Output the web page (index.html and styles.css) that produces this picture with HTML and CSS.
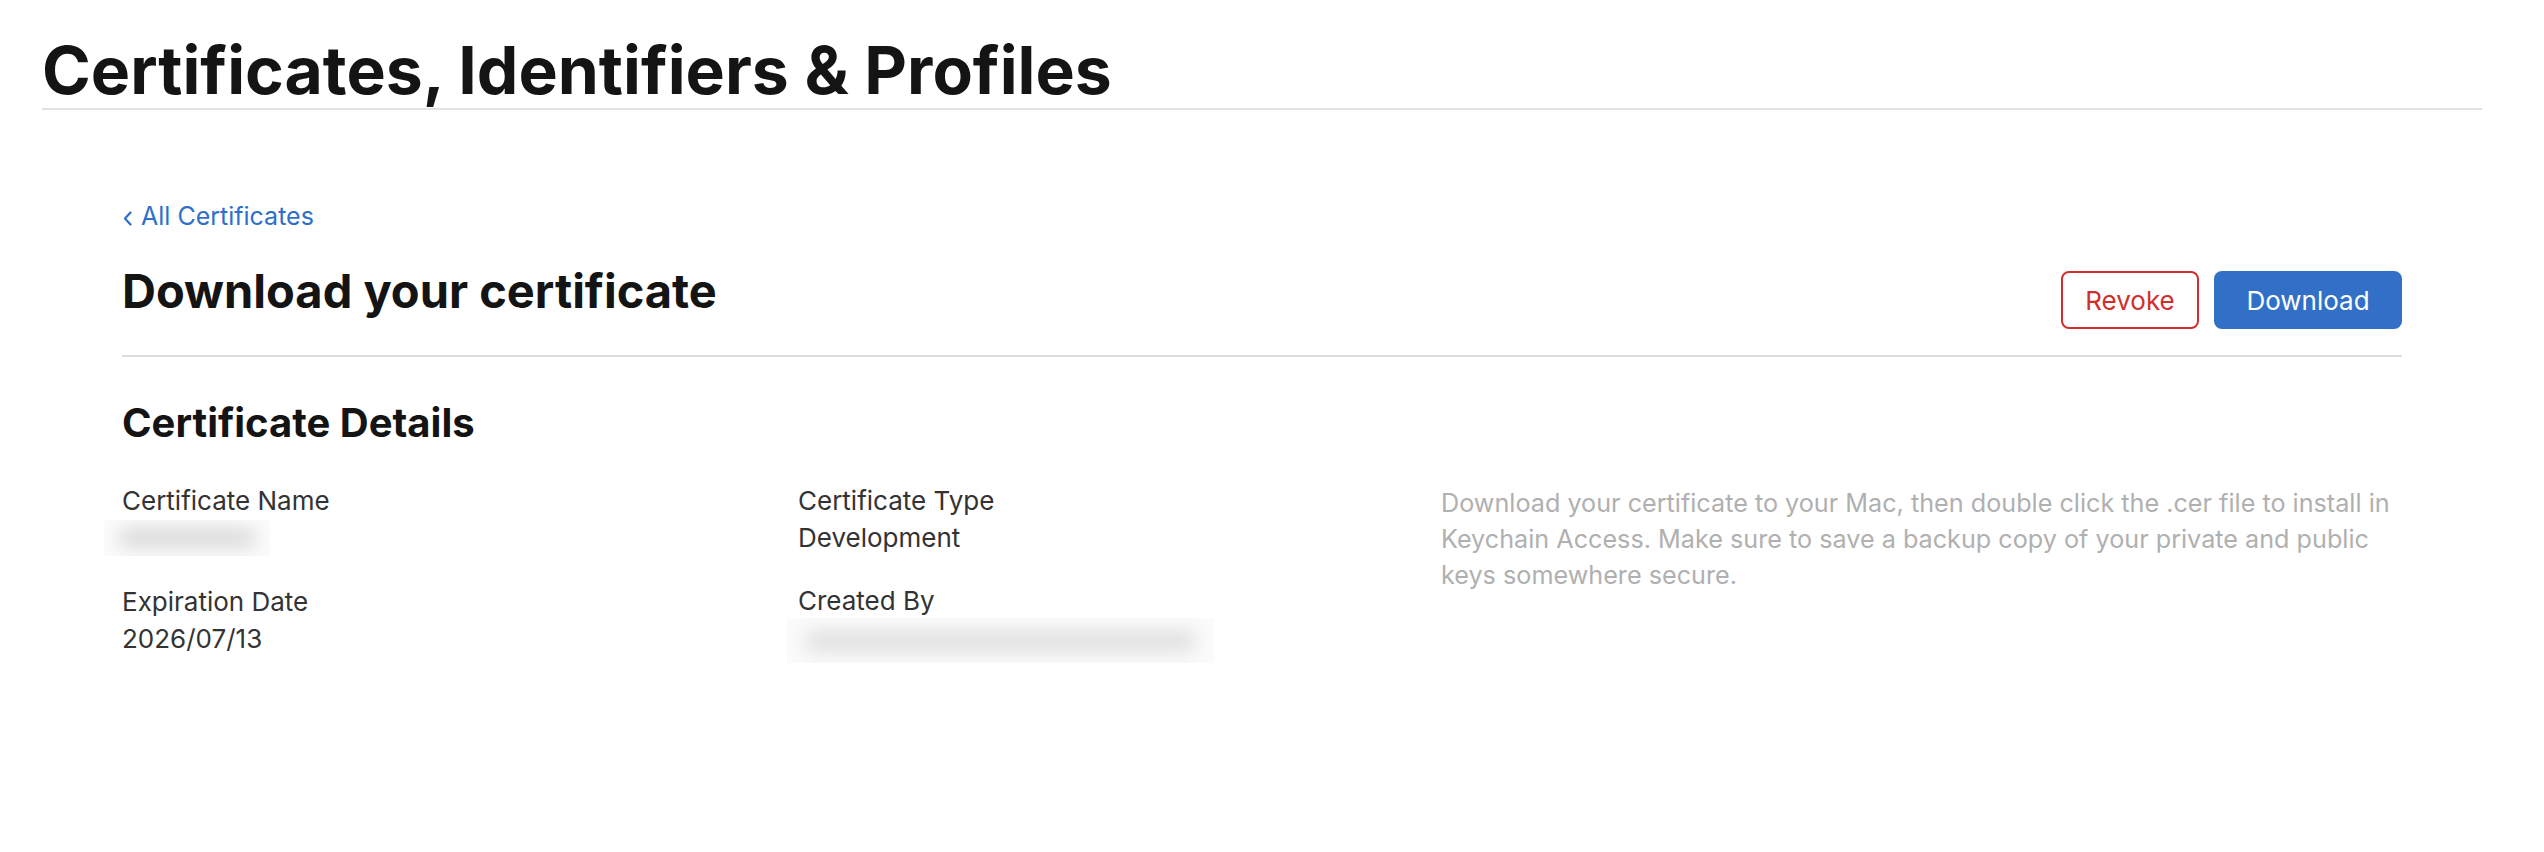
FILE: index.html
```html
<!DOCTYPE html>
<html lang="en">
<head>
<meta charset="utf-8">
<title>Certificates, Identifiers &amp; Profiles</title>
<link rel="stylesheet" href="styles.css">
</head>
<body>
<header class="top">
  <h1 class="page-title">Certificates, Identifiers &amp; Profiles</h1>
</header>
<main class="content">
  <a class="back" href="#"><svg class="chev" width="9" height="15" viewBox="0 0 9 15"><polyline points="7.5,1.5 2,7.5 7.5,13.5" fill="none" stroke="#2f6fc9" stroke-width="2.2" stroke-linecap="round" stroke-linejoin="round"/></svg>All Certificates</a>
  <div class="head-row">
    <h2 class="heading">Download your certificate</h2>
    <div class="actions">
      <button class="btn btn-revoke">Revoke</button>
      <button class="btn btn-download">Download</button>
    </div>
  </div>
  <h3 class="section-title">Certificate Details</h3>
  <div class="details">
    <div class="col">
      <div class="field">
        <div class="label">Certificate Name</div>
        <div class="value"><span class="redact redact-name"><span class="blob"></span></span></div>
      </div>
      <div class="field">
        <div class="label">Expiration Date</div>
        <div class="value">2026/07/13</div>
      </div>
    </div>
    <div class="col">
      <div class="field">
        <div class="label">Certificate Type</div>
        <div class="value">Development</div>
      </div>
      <div class="field">
        <div class="label">Created By</div>
        <div class="value"><span class="redact redact-creator"><span class="blob"></span></span></div>
      </div>
    </div>
    <p class="note">Download your certificate to your Mac, then double click the .cer file to install in Keychain Access. Make sure to save a backup copy of your private and public keys somewhere secure.</p>
  </div>
</main>
</body>
</html>
```

FILE: styles.css
```css
* { box-sizing: border-box; }
html, body { margin: 0; padding: 0; background: #ffffff; }
body {
  font-family: Inter, "Liberation Sans", sans-serif;
  color: #1d1d1f;
  width: 2544px;
}
.top {
  padding: 0 62px 0 42px;
}
.page-title {
  margin: 0;
  padding: 37px 0 5px 0;
  font-size: 66px;
  line-height: 66px;
  font-weight: 700;
  color: #141414;
  border-bottom: 2px solid #e3e3e3;
}
.content {
  padding: 91px 142px 0 122px;
}
.back {
  display: inline-flex;
  align-items: center;
  font-size: 25px;
  line-height: 30px;
  color: #2f6fc9;
  text-decoration: none;
}
.chev { margin: 4px 9px 0 1px; }
.head-row {
  display: flex;
  justify-content: space-between;
  align-items: flex-start;
  margin-top: 35px;
  padding-bottom: 26px;
  border-bottom: 2px solid #dcdcdc;
}
.heading {
  margin: 0;
  font-size: 47px;
  line-height: 50px;
  font-weight: 700;
  color: #141414;
}
.actions {
  display: flex;
  gap: 15px;
  margin-top: 5px;
}
.btn {
  height: 58px;
  border-radius: 8px;
  font-family: Inter, "Liberation Sans", sans-serif;
  font-size: 26px;
  padding: 0;
  cursor: pointer;
}
.btn-revoke {
  width: 138px;
  background: #ffffff;
  color: #cf2f2c;
  border: 2px solid #d0302e;
}
.btn-download {
  width: 188px;
  background: #3170c6;
  color: #ffffff;
  border: none;
}
.section-title {
  margin: 43px 0 0 0;
  font-size: 40px;
  line-height: 46px;
  font-weight: 700;
  color: #141414;
}
.details {
  display: grid;
  grid-template-columns: 676px 643px 1fr;
  margin-top: 36px;
}
.field {
  margin-bottom: 26px;
}
.label, .value {
  font-size: 26px;
  line-height: 37px;
  color: #333333;
}
.value { height: 37px; }
.redact {
  display: block;
  position: relative;
  overflow: hidden;
  background: #fbfbfb;
}
.redact-name {
  width: 166px;
  height: 36px;
  margin: 1px 0 0 -18px;
}
.redact-creator {
  width: 427px;
  height: 45px;
  margin: -1px 0 0 -11px;
}
.blob {
  display: block;
  margin: 8px 14px 0 14px;
  height: 20px;
  border-radius: 10px;
  background: #dadada;
  filter: blur(9px);
}
.redact-creator .blob {
  margin: 12px 18px 0 18px;
  height: 22px;
  background: #e0e0e0;
}
.note {
  margin: 0;
  padding-top: 3px;
  font-size: 25.2px;
  line-height: 36px;
  color: #b0b0b0;
}
```
